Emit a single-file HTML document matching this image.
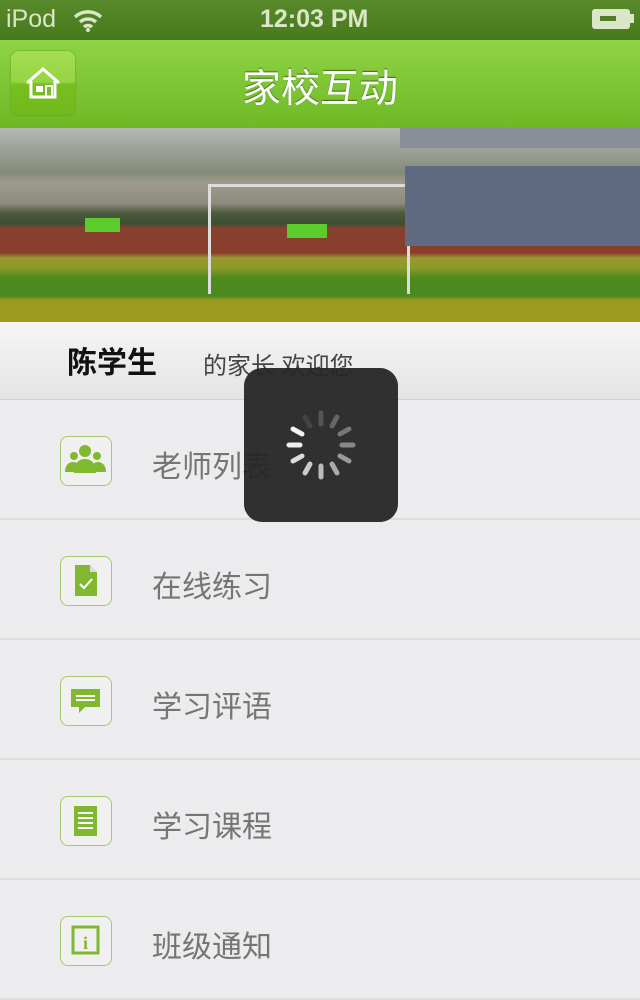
<!DOCTYPE html><html><head><meta charset="utf-8"><style>
*{margin:0;padding:0;box-sizing:border-box}
body{width:640px;height:960px;overflow:hidden;background:#ececee;font-family:"Liberation Sans","Noto Sans CJK SC",sans-serif;position:relative}
.sb{position:absolute;top:0;left:0;width:640px;height:40px;background:linear-gradient(#58892a,#477a1c);color:#d9e6c8;font-size:25px}
.nav{position:absolute;top:40px;left:0;width:640px;height:88px;background:linear-gradient(#8fd445,#6eb826);}
.nav .t{position:absolute;left:0;width:640px;text-align:center;top:18px;color:#fff;font-size:39px;text-shadow:0 -1px 1px #3d6d12}
.hb{position:absolute;left:11px;top:11px;width:64px;height:64px;border-radius:8px;background:linear-gradient(#a6dd50 0,#96d545 48%,#78c020 52%,#70b81c);box-shadow:0 0 2px #5a9a1a}
.photo{position:absolute;top:128px;left:0;width:640px;height:194px;background:linear-gradient(#b5b9b8 0,#9fa29a 20px,#858a78 45px,#9e9b8e 55px,#8f8c7e 75px,#4d5b3c 85px,#3e4c30 96px,#884030 100px,#8a3d2a 125px,#9a9a30 130px,#8a9a28 140px,#4f8a1e 150px,#4a8a1e 168px,#9a9a20 172px,#a09c22 194px)}
.hdr{position:absolute;top:322px;left:0;width:640px;height:78px;background:linear-gradient(#f5f5f5,#e4e4e4);border-bottom:1px solid #d2d2d2}
.row{position:absolute;left:0;width:640px;height:120px;border-bottom:2px solid #dcdcdc}
.ic{position:absolute;left:60px;top:36px;width:52px;height:50px;border:1.5px solid #a8c86a;border-radius:8px;background:#f0f0f0}
.lb{position:absolute;left:152px;top:42px;font-size:30px;color:#757575}
.sp{position:absolute;left:244px;top:368px;width:154px;height:154px;border-radius:18px;background:rgba(38,38,38,.95)}
</style></head><body>
<div class="sb"><span style="position:absolute;left:6px;top:5px">iPod</span>
<svg style="position:absolute;left:72px;top:8px" width="32" height="24" viewBox="0 0 32 24"><path d="M3 9a19 19 0 0 1 26 0M8 14a12 12 0 0 1 16 0M12 19a6 6 0 0 1 8 0" stroke="#d9e6c8" stroke-width="3.5" fill="none"/><circle cx="16" cy="22" r="2" fill="#d9e6c8"/></svg>
<span style="position:absolute;left:260px;top:5px;font-weight:bold">12:03 PM</span>
<div style="position:absolute;left:592px;top:9px;width:38px;height:20px;background:#d9e6c8;border-radius:3px"></div><div style="position:absolute;left:630px;top:14px;width:4px;height:9px;background:#d9e6c8"></div>
<div style="position:absolute;left:600px;top:16px;width:16px;height:5px;background:#4d7f22"></div></div>
<div class="nav"><div class="hb"><svg width="64" height="64" viewBox="0 0 64 64"><path d="M16 32 32 18 48 32M20 30v16h24V30" stroke="#fff" stroke-width="3" fill="none"/><rect x="25" y="35" width="7" height="6" fill="#fff"/><rect x="35" y="35" width="6" height="11" stroke="#fff" stroke-width="2" fill="none"/></svg></div><div class="t">家校互动</div></div>
<div class="photo">
<div style="position:absolute;left:208px;top:56px;width:204px;height:3px;background:#ddd"></div>
<div style="position:absolute;left:208px;top:56px;width:3px;height:110px;background:#ddd"></div>
<div style="position:absolute;left:407px;top:56px;width:3px;height:110px;background:#ddd"></div>
<div style="position:absolute;left:400px;top:0;width:240px;height:20px;background:#8a8e96"></div>
<div style="position:absolute;left:405px;top:38px;width:235px;height:80px;background:#606a80"></div>
<div style="position:absolute;left:85px;top:90px;width:35px;height:14px;background:#5ccc2c"></div>
<div style="position:absolute;left:287px;top:96px;width:40px;height:14px;background:#5ccc2c"></div>
</div>
<div class="hdr"><span style="position:absolute;left:67px;top:16px;font-size:30px;font-weight:bold;color:#111">陈学生</span><span style="position:absolute;left:203px;top:24px;font-size:24px;color:#444">的家长 欢迎您</span></div>
<div class="row" style="top:400px"><div class="ic"><svg width="49" height="47" viewBox="0 0 49 47"><g fill="#80b830"><circle cx="24" cy="14" r="6"/><path d="M13 36c0-10 5-14 11-14s11 4 11 14z"/><circle cx="13" cy="19" r="4"/><path d="M4 35c0-7 4-10 8-10s8 3 8 10z"/><circle cx="36" cy="19" r="4"/><path d="M29 35c0-7 4-10 8-10s8 3 8 10z"/></g></svg></div><div class="lb">老师列表</div></div>
<div class="row" style="top:520px"><div class="ic"><svg width="49" height="47" viewBox="0 0 49 47"><path d="M14 8h15l7 7v24H14z" fill="#80b830"/><path d="M29 8v7h7" fill="#ddd"/><path d="M19 27l4 4 8-9" stroke="#fff" stroke-width="2" fill="none"/></svg></div><div class="lb">在线练习</div></div>
<div class="row" style="top:640px"><div class="ic"><svg width="49" height="47" viewBox="0 0 49 47"><path d="M10 12h29v18H24l-6 6v-6h-8z" fill="#80b830"/><path d="M15 19h19M15 23h19" stroke="#fff" stroke-width="2"/></svg></div><div class="lb">学习评语</div></div>
<div class="row" style="top:760px"><div class="ic"><svg width="49" height="47" viewBox="0 0 49 47"><rect x="13" y="9" width="23" height="30" fill="#80b830"/><path d="M17 16h15M17 21h15M17 26h15M17 31h15" stroke="#fff" stroke-width="2"/></svg></div><div class="lb">学习课程</div></div>
<div class="row" style="top:880px"><div class="ic"><svg width="49" height="47" viewBox="0 0 49 47"><rect x="12" y="10" width="25" height="26" fill="none" stroke="#80b830" stroke-width="3"/><text x="24.5" y="32" text-anchor="middle" font-size="18" font-weight="bold" fill="#80b830" font-family="Liberation Serif">i</text></svg></div><div class="lb">班级通知</div></div>
<div class="sp"><svg width="154" height="154" viewBox="0 0 154 154"><g stroke-width="5" stroke-linecap="round">
<line x1="77" y1="45" x2="77" y2="56" stroke="#555"/>
<line x1="93" y1="49" x2="88" y2="58" stroke="#666"/>
<line x1="105" y1="61" x2="96" y2="66" stroke="#777"/>
<line x1="109" y1="77" x2="98" y2="77" stroke="#888"/>
<line x1="105" y1="93" x2="96" y2="88" stroke="#999"/>
<line x1="93" y1="105" x2="88" y2="96" stroke="#aaa"/>
<line x1="77" y1="109" x2="77" y2="98" stroke="#bbb"/>
<line x1="61" y1="105" x2="66" y2="96" stroke="#ccc"/>
<line x1="49" y1="93" x2="58" y2="88" stroke="#ddd"/>
<line x1="45" y1="77" x2="56" y2="77" stroke="#eee"/>
<line x1="49" y1="61" x2="58" y2="66" stroke="#f4f4f4"/>
<line x1="61" y1="49" x2="66" y2="58" stroke="#444"/></g></svg></div>
</body></html>
